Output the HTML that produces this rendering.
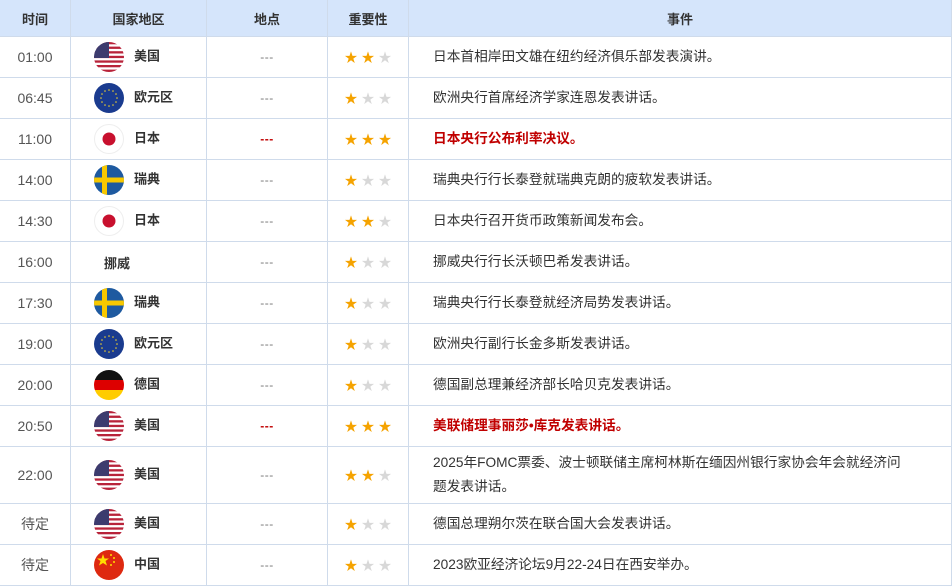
<!DOCTYPE html>
<html><head><meta charset="utf-8"><style>
*{margin:0;padding:0;box-sizing:border-box}
body{width:952px;height:575px;overflow:hidden;background:#fff;font-family:"Liberation Sans","Noto Sans CJK SC",sans-serif;color:#333}
table{border-collapse:collapse;table-layout:fixed;width:953px;position:absolute;left:-1px;top:-1px}
td,th{border:1px solid #cfdbeb;font-size:13px;vertical-align:middle}
th{background:#d5e5fb;height:37px;font-weight:bold;color:#333;font-size:13px}
td{height:41px;text-align:center}
td.t{font-size:14px;color:#555}
td.c{text-align:left;padding-left:23px;font-weight:bold;color:#333}
td.c svg{vertical-align:middle;margin-right:10px}
td.e{text-align:left;padding-left:24px;padding-right:10px;line-height:24px;font-size:13.7px}
.r{color:#c00000;font-weight:bold}
.d{color:#777;letter-spacing:0.5px;font-size:12px}
.dr{color:#c00000;letter-spacing:0.5px;font-weight:bold;font-size:12px}
.s{display:inline-block;width:17px;font-size:13px;line-height:13px}
.y{color:#f5a300}.g{color:#d8d8d8}
</style></head><body>
<svg width="0" height="0" style="position:absolute"><defs>
<clipPath id="cp"><circle cx="15" cy="15" r="15"/></clipPath>
<g id="us" clip-path="url(#cp)"><rect width="30" height="30" fill="#fff"/><g fill="#b8233a"><rect y="0" width="30" height="2.3"/><rect y="4.6" width="30" height="2.3"/><rect y="9.2" width="30" height="2.3"/><rect y="13.8" width="30" height="2.3"/><rect y="18.4" width="30" height="2.3"/><rect y="23" width="30" height="2.3"/><rect y="27.6" width="30" height="2.4"/></g><rect width="15" height="16" fill="#3c3b6e"/></g>
<g id="eu" clip-path="url(#cp)"><rect width="30" height="30" fill="#1a3b8f"/><g fill="#f2d22e"><circle cx="15" cy="7" r=".8"/><circle cx="19" cy="8" r=".8"/><circle cx="22" cy="11" r=".8"/><circle cx="23" cy="15" r=".8"/><circle cx="22" cy="19" r=".8"/><circle cx="19" cy="22" r=".8"/><circle cx="15" cy="23" r=".8"/><circle cx="11" cy="22" r=".8"/><circle cx="8" cy="19" r=".8"/><circle cx="7" cy="15" r=".8"/><circle cx="8" cy="11" r=".8"/><circle cx="11" cy="8" r=".8"/></g></g>
<g id="jp"><circle cx="15" cy="15" r="14.5" fill="#fff" stroke="#eee"/><circle cx="15" cy="15" r="6.5" fill="#c8102e"/></g>
<g id="se" clip-path="url(#cp)"><rect width="30" height="30" fill="#1e5aa0"/><rect x="8" width="5" height="30" fill="#f7c800"/><rect y="12.5" width="30" height="5" fill="#f7c800"/></g>
<g id="de" clip-path="url(#cp)"><rect width="30" height="10" fill="#111"/><rect y="10" width="30" height="10" fill="#dd0000"/><rect y="20" width="30" height="10" fill="#ffcc00"/></g>
<g id="cn" clip-path="url(#cp)"><rect width="30" height="30" fill="#de2910"/><polygon points="9,4 10.5,8.5 15,8.5 11.5,11 13,15.5 9,13 5,15.5 6.5,11 3,8.5 7.5,8.5" fill="#ffde00"/><g fill="#ffde00"><circle cx="17" cy="5" r="1"/><circle cx="20" cy="8" r="1"/><circle cx="20" cy="12" r="1"/><circle cx="17" cy="15" r="1"/></g></g>
</defs></svg>
<table>
<colgroup><col style="width:71px"><col style="width:136px"><col style="width:121px"><col style="width:81px"><col></colgroup>
<tr><th>时间</th><th>国家地区</th><th>地点</th><th>重要性</th><th>事件</th></tr>
<tr><td class="t">01:00</td><td class="c"><svg width="30" height="30"><use href="#us"/></svg>美国</td><td class="d">---</td><td><span class="s y">★</span><span class="s y">★</span><span class="s g">★</span></td><td class="e">日本首相岸田文雄在纽约经济俱乐部发表演讲。</td></tr>
<tr><td class="t">06:45</td><td class="c"><svg width="30" height="30"><use href="#eu"/></svg>欧元区</td><td class="d">---</td><td><span class="s y">★</span><span class="s g">★</span><span class="s g">★</span></td><td class="e">欧洲央行首席经济学家连恩发表讲话。</td></tr>
<tr><td class="t">11:00</td><td class="c"><svg width="30" height="30"><use href="#jp"/></svg>日本</td><td class="dr">---</td><td><span class="s y">★</span><span class="s y">★</span><span class="s y">★</span></td><td class="e r">日本央行公布利率决议。</td></tr>
<tr><td class="t">14:00</td><td class="c"><svg width="30" height="30"><use href="#se"/></svg>瑞典</td><td class="d">---</td><td><span class="s y">★</span><span class="s g">★</span><span class="s g">★</span></td><td class="e">瑞典央行行长泰登就瑞典克朗的疲软发表讲话。</td></tr>
<tr><td class="t">14:30</td><td class="c"><svg width="30" height="30"><use href="#jp"/></svg>日本</td><td class="d">---</td><td><span class="s y">★</span><span class="s y">★</span><span class="s g">★</span></td><td class="e">日本央行召开货币政策新闻发布会。</td></tr>
<tr><td class="t">16:00</td><td class="c" style="padding-left:33px">挪威</td><td class="d">---</td><td><span class="s y">★</span><span class="s g">★</span><span class="s g">★</span></td><td class="e">挪威央行行长沃顿巴希发表讲话。</td></tr>
<tr><td class="t">17:30</td><td class="c"><svg width="30" height="30"><use href="#se"/></svg>瑞典</td><td class="d">---</td><td><span class="s y">★</span><span class="s g">★</span><span class="s g">★</span></td><td class="e">瑞典央行行长泰登就经济局势发表讲话。</td></tr>
<tr><td class="t">19:00</td><td class="c"><svg width="30" height="30"><use href="#eu"/></svg>欧元区</td><td class="d">---</td><td><span class="s y">★</span><span class="s g">★</span><span class="s g">★</span></td><td class="e">欧洲央行副行长金多斯发表讲话。</td></tr>
<tr><td class="t">20:00</td><td class="c"><svg width="30" height="30"><use href="#de"/></svg>德国</td><td class="d">---</td><td><span class="s y">★</span><span class="s g">★</span><span class="s g">★</span></td><td class="e">德国副总理兼经济部长哈贝克发表讲话。</td></tr>
<tr><td class="t">20:50</td><td class="c"><svg width="30" height="30"><use href="#us"/></svg>美国</td><td class="dr">---</td><td><span class="s y">★</span><span class="s y">★</span><span class="s y">★</span></td><td class="e r">美联储理事丽莎•库克发表讲话。</td></tr>
<tr><td class="t" style="height:57px">22:00</td><td class="c"><svg width="30" height="30"><use href="#us"/></svg>美国</td><td class="d">---</td><td><span class="s y">★</span><span class="s y">★</span><span class="s g">★</span></td><td class="e">2025年FOMC票委、波士顿联储主席柯林斯在缅因州银行家协会年会就经济问<br>题发表讲话。</td></tr>
<tr><td class="t">待定</td><td class="c"><svg width="30" height="30"><use href="#us"/></svg>美国</td><td class="d">---</td><td><span class="s y">★</span><span class="s g">★</span><span class="s g">★</span></td><td class="e">德国总理朔尔茨在联合国大会发表讲话。</td></tr>
<tr><td class="t">待定</td><td class="c"><svg width="30" height="30"><use href="#cn"/></svg>中国</td><td class="d">---</td><td><span class="s y">★</span><span class="s g">★</span><span class="s g">★</span></td><td class="e">2023欧亚经济论坛9月22-24日在西安举办。</td></tr>
</table>
</body></html>
